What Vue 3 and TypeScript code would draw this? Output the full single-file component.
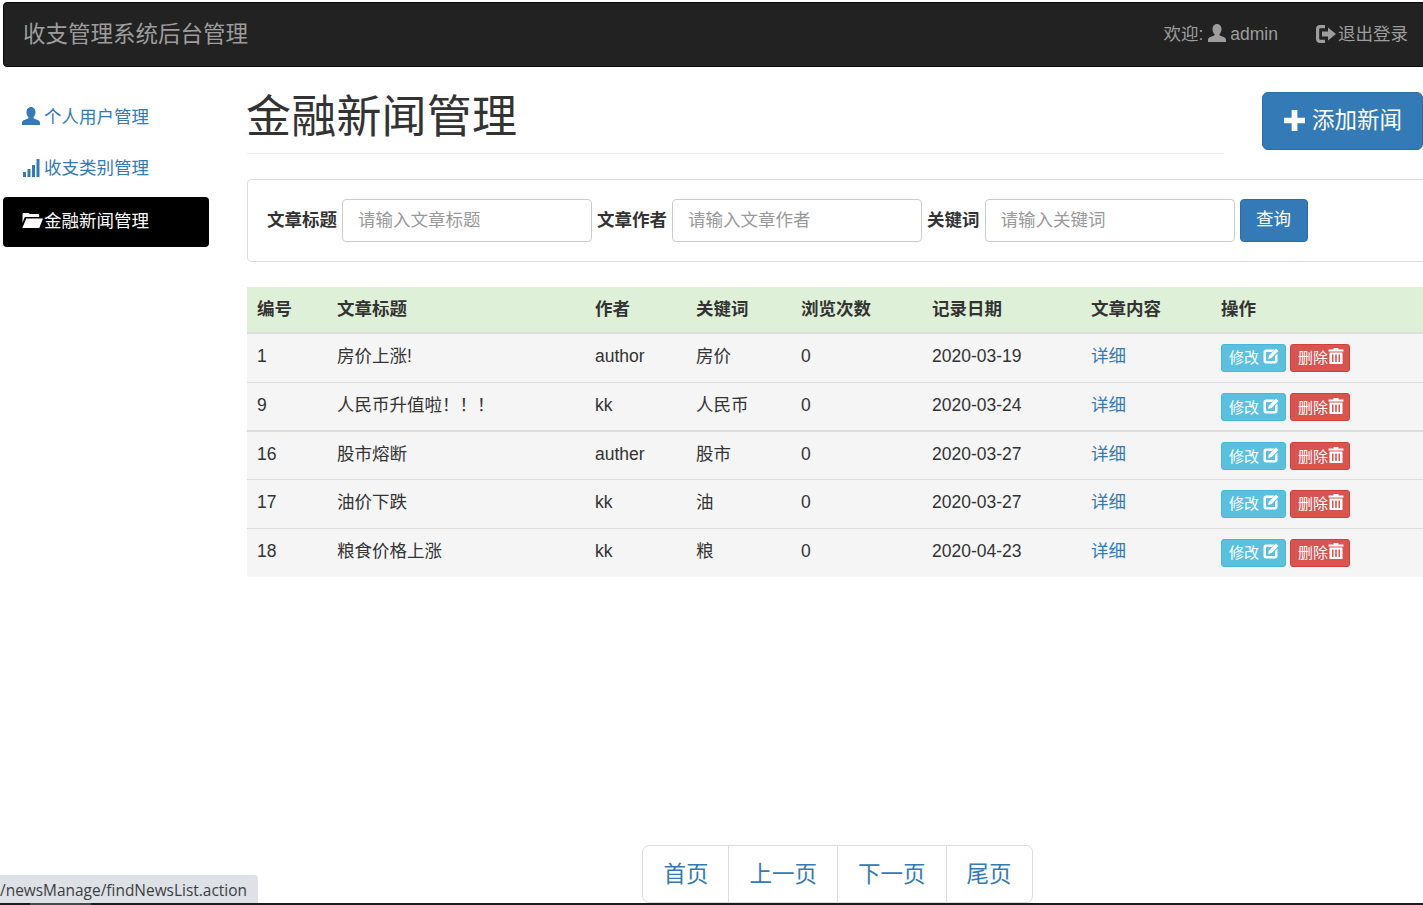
<script setup lang="ts">
interface NewsRow {
  id: number
  title: string
  author: string
  keyword: string
  views: number
  date: string
}

const rows: NewsRow[] = [
  { id: 1, title: '房价上涨!', author: 'author', keyword: '房价', views: 0, date: '2020-03-19' },
  { id: 9, title: '人民币升值啦！！！', author: 'kk', keyword: '人民币', views: 0, date: '2020-03-24' },
  { id: 16, title: '股市熔断', author: 'auther', keyword: '股市', views: 0, date: '2020-03-27' },
  { id: 17, title: '油价下跌', author: 'kk', keyword: '油', views: 0, date: '2020-03-27' },
  { id: 18, title: '粮食价格上涨', author: 'kk', keyword: '粮', views: 0, date: '2020-04-23' }
]

const userPath = 'M8 0c2.600 0 4 2.100 4 4.600 0 1.800-.8 3.400-1.700 4.300-.4.5-.2 1.100.4 1.400 2 .9 5.300 1.700 5.300 3.700V16H0v-2c0-2 3.300-2.800 5.300-3.700.6-.3.8-.9.4-1.400C4.800 8 4 6.400 4 4.600 4 2.100 5.400 0 8 0z'
</script>

<template>
  <div class="page">
    <header class="navbar">
      <span class="brand">收支管理系统后台管理</span>
      <div class="nav-right">
        <span class="welcome">欢迎:
          <svg class="ico nav-user" viewBox="0 0 16 16"><path :d="userPath" /></svg>
          admin</span>
        <span class="logout">
          <svg class="ico nav-out" viewBox="0 0 20 18">
            <path d="M9 0H4C1.600 0 0 1.600 0 4v10c0 2.400 1.600 4 4 4h5v-3.200H4.500c-.8 0-1.300-.5-1.300-1.300V4.500c0-.8.5-1.300 1.300-1.300H9z" />
            <path d="M12 2.500 20 9l-8 6.500V11.500H6v-5h6z" />
          </svg>退出登录</span>
      </div>
    </header>

    <div class="body">
      <nav class="side">
        <a class="pill">
          <svg class="ico side-ico" viewBox="0 0 16 16"><path :d="userPath" /></svg>个人用户管理
        </a>
        <a class="pill">
          <svg class="ico side-ico" viewBox="0 0 18 18">
            <rect x="1" y="13" width="3" height="5" />
            <rect x="5.500" y="10" width="3" height="8" />
            <rect x="10" y="6" width="3" height="12" />
            <rect x="14.500" y="0" width="3" height="18" />
          </svg>收支类别管理
        </a>
        <a class="pill active">
          <svg class="ico side-ico folder" viewBox="0 0 22 17">
            <path d="M1 5V2.500C1 1.500 1.600 1 2.500 1h4.200c.7 0 1.100.4 1.400 1h8.400c.8 0 1.200.5 1.200 1.200V5H4.500c-.9 0-1.400.4-1.700 1.100L1 11z" />
            <path d="M4.800 6.500H21.500L17.800 16H0.800z" />
          </svg>金融新闻管理
        </a>
      </nav>

      <main class="main">
        <div class="head-row">
          <h1 class="title">金融新闻管理</h1>
          <button class="add-btn" type="button">
            <svg class="ico plus" viewBox="0 0 22 22"><path d="M8 0h6v8h8v6h-8v8H8v-8H0V8h8z" /></svg>添加新闻
          </button>
        </div>

        <form class="search" @submit.prevent>
          <label>文章标题</label>
          <input type="text" placeholder="请输入文章标题" />
          <label>文章作者</label>
          <input type="text" placeholder="请输入文章作者" />
          <label>关键词</label>
          <input type="text" placeholder="请输入关键词" />
          <button class="query" type="submit">查询</button>
        </form>

        <table class="grid">
          <thead>
            <tr>
              <th>编号</th>
              <th>文章标题</th>
              <th>作者</th>
              <th>关键词</th>
              <th>浏览次数</th>
              <th>记录日期</th>
              <th>文章内容</th>
              <th>操作</th>
            </tr>
          </thead>
          <tbody>
            <tr v-for="row in rows" :key="row.id">
              <td>{{ row.id }}</td>
              <td>{{ row.title }}</td>
              <td>{{ row.author }}</td>
              <td>{{ row.keyword }}</td>
              <td>{{ row.views }}</td>
              <td>{{ row.date }}</td>
              <td><a class="link">详细</a></td>
              <td class="ops">
                <button class="mini info" type="button">修改
                  <svg class="ico mini-ico" viewBox="0 0 16 16">
                    <path d="M3 1.500h8.500L9 4H3.500C3.200 4 3 4.200 3 4.500v8c0 .3.200.5.500.5h8c.3 0 .5-.2.500-.5V8l2.500-2.500V13c0 1.500-1 2.500-2.500 2.500H3C1.500 15.500.5 14.500.5 13V4C.5 2.500 1.500 1.500 3 1.500z" />
                    <path d="M13 .5l2.500 2.500-7 7L5 11l1-3.500z" />
                  </svg>
                </button>
                <button class="mini danger" type="button">删除<svg class="ico mini-ico" viewBox="0 0 16 16">
                    <path d="M5.500 0h5v1.500H15.500V3.500H.5V1.500h5z" />
                    <path d="M1.500 4.500h13V16h-13zM4 6.500V14h1.500V6.500zM7.200 6.500V14h1.600V6.500zM10.500 6.500V14H12V6.500z" fill-rule="evenodd" />
                  </svg>
                </button>
              </td>
            </tr>
          </tbody>
        </table>

        <div class="pager-wrap">
          <ul class="pager">
            <li>首页</li>
            <li>上一页</li>
            <li>下一页</li>
            <li>尾页</li>
          </ul>
        </div>
      </main>
    </div>

    <div class="status">/newsManage/findNewsList.action</div>
    <div class="edge"></div>
  </div>
</template>

<style>
html, body { margin: 0; background: #fff; overflow: hidden; }
</style>

<style scoped>
.page {
  position: relative;
  width: 1423px;
  height: 905px;
  overflow: hidden;
  display: flex;
  flex-direction: column;
  box-sizing: border-box;
  padding-top: 2px;
  font-family: "Liberation Sans", "Noto Sans CJK SC", sans-serif;
  font-size: 17.5px;
  line-height: 25px;
  color: #333;
}
.ico { fill: currentColor; display: inline-block; flex: none; }

.navbar {
  flex: none;
  width: 1440px;
  height: 65px;
  margin-left: 3px;
  box-sizing: border-box;
  background: #222;
  border: 1px solid #080808;
  border-radius: 4px;
  display: flex;
  align-items: center;
  color: #9d9d9d;
  padding-left: 19px;
}
.brand { font-size: 22.5px; }
.nav-right {
  margin-left: auto;
  display: flex;
  align-items: center;
  padding-right: 34px;
}
.welcome { display: inline-flex; align-items: center; gap: 4px; }
.nav-user { width: 18px; height: 18px; margin: -3px 0 0 1px; }
.logout { display: inline-flex; align-items: center; margin-left: 38px; }
.nav-out { width: 20px; height: 18px; margin: -2px 2px 0 0; }

.body {
  flex: 1;
  min-height: 0;
  display: flex;
}
.side {
  flex: none;
  width: 206px;
  margin-left: 3px;
  padding-top: 25px;
  display: flex;
  flex-direction: column;
  gap: 2.5px;
}
.pill {
  height: 50px;
  box-sizing: border-box;
  display: flex;
  align-items: center;
  padding: 0 0 1px 18px;
  border-radius: 4px;
  color: #337ab7;
  white-space: nowrap;
}
.pill:nth-child(1) { padding-bottom: 0; }
.pill:nth-child(2) { padding-bottom: 2px; }
.pill.active { background: #000; color: #fff; }
.side-ico { width: 18px; height: 18px; margin: -2px 4px 0 1px; }
.folder { width: 23px; height: 17px; margin: -3px 0 0 0; }

.main {
  flex: none;
  width: 1176px;
  margin-left: 38px;
  display: flex;
  flex-direction: column;
}
.head-row {
  display: flex;
  align-items: flex-start;
  justify-content: space-between;
  padding-top: 25px;
}
.title {
  width: 977px;
  height: 61px;
  margin: 0;
  border-bottom: 1px solid #eee;
  font-size: 45px;
  line-height: 51px;
  font-weight: 400;
  color: #333;
  text-indent: -1px;
  letter-spacing: 0.2px;
}
.add-btn {
  width: 161px;
  height: 58px;
  box-sizing: border-box;
  display: flex;
  align-items: center;
  padding: 0 0 2px 20px;
  background: #337ab7;
  border: 1px solid #2e6da4;
  border-radius: 6px;
  color: #fff;
  font: inherit;
  font-size: 22.5px;
  white-space: nowrap;
}
.plus { width: 21px; height: 21px; margin: 0 7px 0 1px; }

.search {
  width: 1230px;
  height: 83px;
  margin-top: 25px;
  box-sizing: border-box;
  border: 1px solid #ddd;
  border-radius: 4px;
  display: flex;
  align-items: center;
  padding-left: 19px;
}
.search label { font-weight: 700; white-space: nowrap; margin-right: 5px; }
.search input {
  width: 250px;
  height: 43px;
  box-sizing: border-box;
  border: 1px solid #ccc;
  border-radius: 4px;
  padding: 0 15px;
  margin-right: 5px;
  font: inherit;
  color: #555;
  outline: none;
}
.search input::placeholder { color: #999; opacity: 1; }
.query {
  width: 68px;
  height: 43px;
  box-sizing: border-box;
  padding: 0 0 2px;
  background: #337ab7;
  border: 1px solid #2e6da4;
  border-radius: 4px;
  color: #fff;
  font: inherit;
}

.grid {
  width: 1230px;
  margin-top: 25px;
  border-collapse: collapse;
  table-layout: fixed;
  flex: none;
}
.grid th, .grid td {
  box-sizing: border-box;
  padding: 0 10px;
  text-align: left;
  white-space: nowrap;
}
.grid th:nth-child(1) { width: 80px; }
.grid th:nth-child(2) { width: 258px; }
.grid th:nth-child(3) { width: 101px; }
.grid th:nth-child(4) { width: 105px; }
.grid th:nth-child(5) { width: 131px; }
.grid th:nth-child(6) { width: 159px; }
.grid th:nth-child(7) { width: 130px; }
.grid thead tr { height: 46px; background: #dff0d8; border-bottom: 2px solid #ddd; }
.grid th { font-weight: 700; }
.grid tbody tr { height: 49px; background: #f5f5f5; border-bottom: 1px solid #ddd; }
.grid tbody tr:nth-child(2) { border-bottom-width: 2px; }
.grid tbody tr:nth-child(3) { height: 48px; }
.grid tbody tr:last-child { border-bottom: none; }
.grid td { padding-bottom: 3px; }
.grid tbody tr:nth-child(2) td,
.grid tbody tr:nth-child(3) td { padding-top: 2px; }
.link { color: #337ab7; }
.grid td.ops { padding-bottom: 0; font-size: 0; }
.mini {
  height: 28px;
  box-sizing: border-box;
  display: inline-flex;
  align-items: center;
  vertical-align: middle;
  padding: 0 0 2px 7px;
  border: 1px solid;
  border-radius: 3px;
  color: #fff;
  font-family: inherit;
  font-size: 15px;
  gap: 4px;
}
.info { width: 65px; background: #5bc0de; border-color: #46b8da; }
.danger { width: 60px; margin-left: 4px; background: #d9534f; border-color: #d43f3a; gap: 0; }
.mini-ico { width: 16px; height: 16px; margin-top: -1px; }

.pager-wrap {
  margin-top: auto;
  margin-bottom: 2px;
  display: flex;
  justify-content: center;
  width: 1181px;
}
.pager {
  list-style: none;
  margin: 0;
  padding: 0;
  display: flex;
  height: 58px;
  box-sizing: border-box;
  border: 1px solid #ddd;
  border-radius: 7px;
  color: #337ab7;
  font-size: 22.5px;
}
.pager li {
  display: flex;
  align-items: center;
  padding: 0 20px;
  border-left: 1px solid #ddd;
}
.pager li:first-child { border-left: none; }

.status {
  position: absolute;
  left: 0;
  bottom: 2px;
  width: 258px;
  height: 28px;
  box-sizing: border-box;
  background: #dee1e6;
  border-top-right-radius: 4px;
  font-family: "Open Sans", "Noto Sans", sans-serif;
  font-size: 15.45px;
  line-height: 31px;
  color: #3c4043;
  white-space: nowrap;
  overflow: hidden;
}
.edge {
  position: absolute;
  left: 0;
  right: 0;
  bottom: 0;
  height: 2px;
  background: #1c1c1c;
}
.edge::before {
  content: "";
  position: absolute;
  left: 30px;
  top: 0;
  width: 61px;
  height: 2px;
  background: #484848;
}
</style>
